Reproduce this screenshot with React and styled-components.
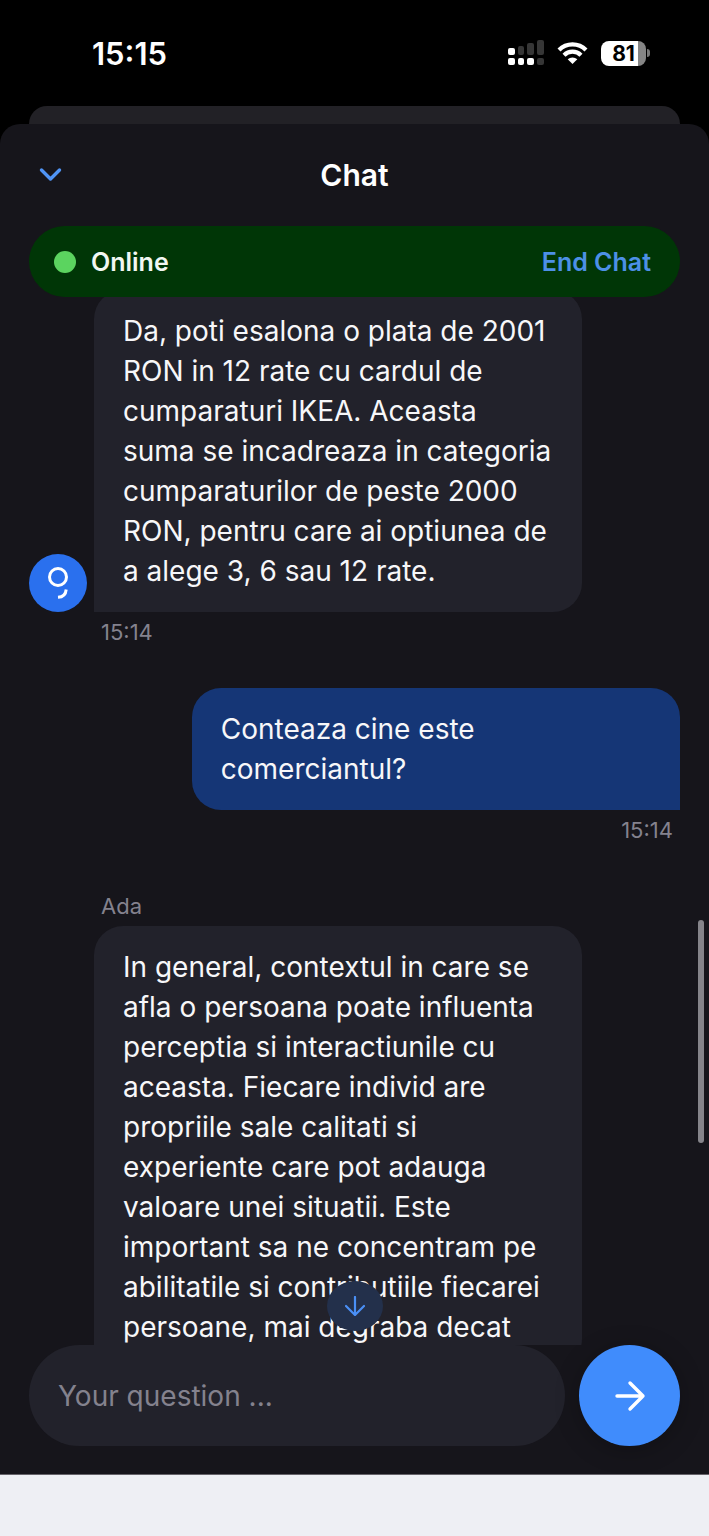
import styled, { createGlobalStyle } from "styled-components";

const GlobalStyle = createGlobalStyle`
  * {
    box-sizing: border-box;
  }

  body {
    margin: 0;
    background: #000;
    font-family: Inter, "Liberation Sans", sans-serif;
  }

  button {
    border: 0;
    padding: 0;
    background: none;
    font-family: inherit;
    cursor: pointer;
  }
`;

const Screen = styled.div`
  display: flex;
  flex-direction: column;
  height: 100vh;
  background: #000;
`;

const StatusBar = styled.div`
  display: flex;
  align-items: center;
  justify-content: space-between;
  height: 106px;
  padding: 0 59px 0 92px;
  color: #fff;

  .clock {
    font-size: 31px;
    font-weight: 600;
  }

  .indicators {
    display: flex;
    align-items: center;
    gap: 13px;
  }
`;

const Battery = styled.div`
  display: flex;
  align-items: center;

  .level {
    width: 45px;
    height: 25px;
    border-radius: 8px;
    background: linear-gradient(to right, #fff 82%, #858585 82%);
    color: #000;
    font-size: 21px;
    font-weight: 700;
    line-height: 25px;
    text-align: center;
  }

  .tip {
    width: 3px;
    height: 8px;
    margin-left: 1px;
    border-radius: 0 3px 3px 0;
    background: #777;
  }
`;

const BackCard = styled.div`
  height: 36px;
  margin: 0 29px -18px;
  border-radius: 18px 18px 0 0;
  background: #222126;
`;

const Sheet = styled.main`
  position: relative;
  flex: 1;
  min-height: 0;
  display: flex;
  flex-direction: column;
  border-radius: 20px 20px 0 0;
  background: #16151b;
`;

const Header = styled.header`
  display: grid;
  grid-template-columns: 44px 1fr 44px;
  align-items: center;
  height: 102px;
  padding: 0 29px;

  h1 {
    margin: 0;
    color: #fff;
    font-size: 30px;
    font-weight: 600;
    text-align: center;
  }

  button {
    display: flex;
    justify-content: center;
    color: #5094f5;
  }
`;

const Banner = styled.div`
  position: relative;
  z-index: 1;
  display: flex;
  align-items: center;
  height: 71px;
  margin: 0 29px;
  padding: 0 29px 0 25px;
  border-radius: 36px;
  background: #003606;
  color: #f2f7f2;
  font-size: 25px;
  font-weight: 600;

  .dot {
    width: 22px;
    height: 22px;
    margin-right: 15px;
    border-radius: 50%;
    background: #5bd45f;
  }

  button {
    margin-left: auto;
    color: #4d90e6;
    font-size: 25px;
    font-weight: 600;
  }
`;

const Messages = styled.section`
  position: relative;
  flex: 1;
  min-height: 0;
  display: flex;
  flex-direction: column;
  gap: 36px;
  margin-top: -7px;
  padding: 0 29px;
  overflow: hidden;
`;

const Message = styled.article`
  flex: none;
  display: flex;
  flex-direction: column;
  width: 75%;
  margin-left: ${({ $own }) => ($own ? "auto" : "65px")};
  align-items: ${({ $own }) => ($own ? "flex-end" : "flex-start")};
`;

const BubbleRow = styled.div`
  display: flex;
  align-items: flex-end;
  gap: 7px;
  margin-left: ${({ $avatar }) => ($avatar ? "-65px" : "0")};
  width: ${({ $avatar }) => ($avatar ? "calc(100% + 65px)" : "100%")};
`;

const Bubble = styled.p`
  flex: 1;
  margin: 0;
  padding: 21px 29px;
  border-radius: ${({ $own }) => ($own ? "29px 29px 0 29px" : "29px 29px 29px 0")};
  background: ${({ $own }) => ($own ? "#153676" : "#22222b")};
  color: #f7f7f9;
  font-size: 28px;
  line-height: 40px;
`;

const Meta = styled.span`
  margin: 6px 0;
  padding: 0 7px;
  color: #84828e;
  font-size: 22px;
  line-height: 28px;
`;

const Avatar = styled.svg`
  flex: none;
  width: 58px;
  height: 58px;
`;

const ScrollThumb = styled.div`
  position: absolute;
  top: 630px;
  right: 5px;
  width: 6px;
  height: 223px;
  border-radius: 3px;
  background: #85848a;
`;

const ScrollDown = styled.button`
  position: absolute;
  bottom: 14px;
  left: 50%;
  display: flex;
  align-items: center;
  justify-content: center;
  width: 56px;
  height: 50px;
  margin-left: -28px;
  border-radius: 50%;
  background: #23304b;
  color: #4a8ff5;
`;

const Composer = styled.form`
  display: flex;
  gap: 14px;
  padding: 0 29px 28px;

  input {
    flex: 1;
    min-width: 0;
    height: 101px;
    padding: 0 29px;
    border: 0;
    border-radius: 51px;
    outline: 0;
    background: #22222b;
    color: #f7f7f9;
    font-family: inherit;
    font-size: 28px;
  }

  input::placeholder {
    color: #84828e;
    opacity: 1;
  }
`;

const SendButton = styled.button`
  display: flex;
  align-items: center;
  justify-content: center;
  width: 101px;
  height: 101px;
  border-radius: 50%;
  background: #408cfc;
  box-shadow: 0 4px 24px rgba(0, 0, 0, 0.25);
  color: #fff;
`;

const HomeArea = styled.footer`
  height: 62px;
  border-top: 1px solid #66636a;
  background: #eeeff4;
`;

const messages = [
  {
    text: "Da, poti esalona o plata de 2001 RON in 12 rate cu cardul de cumparaturi IKEA. Aceasta suma se incadreaza in categoria cumparaturilor de peste 2000 RON, pentru care ai optiunea de a alege 3, 6 sau 12 rate.",
    time: "15:14",
    avatar: true,
  },
  {
    text: "Conteaza cine este comerciantul?",
    time: "15:14",
    own: true,
  },
  {
    name: "Ada",
    text: "In general, contextul in care se afla o persoana poate influenta perceptia si interactiunile cu aceasta. Fiecare individ are propriile sale calitati si experiente care pot adauga valoare unei situatii. Este important sa ne concentram pe abilitatile si contributiile fiecarei persoane, mai degraba decat",
  },
];

const SignalIcon = () => (
  <svg width="36" height="26" viewBox="0 0 36 26" fill="#fff">
    <rect x="0" y="8" width="7" height="7" rx="2" />
    <rect x="10" y="6" width="6" height="9" rx="2" fill="#363636" />
    <rect x="19" y="3" width="7" height="12" rx="2" fill="#363636" />
    <rect x="29" y="0" width="7" height="15" rx="2" fill="#363636" />
    <rect x="0" y="18" width="7" height="7" rx="2" />
    <rect x="10" y="18" width="6" height="7" rx="2" />
    <rect x="19" y="18" width="7" height="7" rx="2" />
    <rect x="29" y="18" width="7" height="7" rx="2" fill="#363636" />
  </svg>
);

const WifiIcon = () => (
  <svg width="31" height="24" viewBox="0 0 31 24" fill="none" stroke="#fff" strokeWidth="4.2">
    <path d="M2 9 A19 19 0 0 1 29 9" />
    <path d="M7 14.2 A12 12 0 0 1 24 14.2" />
    <path d="M15.5 23 L10.7 18.3 A7 7 0 0 1 20.3 18.3 Z" fill="#fff" stroke="none" />
  </svg>
);

const App = () => {
  return (
    <Screen>
      <GlobalStyle />
      <StatusBar>
        <span className="clock">15:15</span>
        <div className="indicators">
          <SignalIcon />
          <WifiIcon />
          <Battery>
            <span className="level">81</span>
            <span className="tip" />
          </Battery>
        </div>
      </StatusBar>

      <BackCard />
      <Sheet>
        <Header>
          <button type="button" aria-label="Close chat">
            <svg width="24" height="16" viewBox="0 0 24 16" fill="none" stroke="currentColor" strokeWidth="3.4" strokeLinecap="round" strokeLinejoin="round">
              <path d="M2.5 3 L11.5 12 L20.5 3" />
            </svg>
          </button>
          <h1>Chat</h1>
        </Header>

        <Banner>
          <span className="dot" />
          <span>Online</span>
          <button type="button">End Chat</button>
        </Banner>

        <Messages>
          {messages.map((message, index) => (
            <Message key={index} $own={message.own}>
              {message.name && <Meta>{message.name}</Meta>}
              <BubbleRow $avatar={message.avatar}>
                {message.avatar && (
                  <Avatar viewBox="0 0 58 58" fill="none" stroke="#fff" strokeWidth="3">
                    <circle cx="29" cy="29" r="29" fill="#2a70ee" stroke="none" />
                    <circle cx="29" cy="23" r="8.5" />
                    <path d="M37.2 35.5 C36.8 40 33.8 43 29 43.3" />
                  </Avatar>
                )}
                <Bubble $own={message.own}>{message.text}</Bubble>
              </BubbleRow>
              {message.time && <Meta>{message.time}</Meta>}
            </Message>
          ))}
          <ScrollThumb />
          <ScrollDown type="button" aria-label="Scroll to latest">
            <svg width="20" height="20" viewBox="0 0 20 20" fill="none" stroke="currentColor" strokeWidth="2.2" strokeLinecap="round" strokeLinejoin="round">
              <path d="M10 1 V19 M1 10 L10 19 L19 10" />
            </svg>
          </ScrollDown>
        </Messages>

        <Composer onSubmit={(e) => e.preventDefault()}>
          <input type="text" aria-label="Your question" placeholder="Your question ..." autoComplete="off" />
          <SendButton type="submit" aria-label="Send">
            <svg width="32" height="32" viewBox="0 0 32 32" fill="none" stroke="currentColor" strokeWidth="3.4" strokeLinecap="round" strokeLinejoin="round">
              <path d="M3 16 H29 M16 3 L29 16 L16 29" />
            </svg>
          </SendButton>
        </Composer>
      </Sheet>
      <HomeArea />
    </Screen>
  );
};

export default App;
